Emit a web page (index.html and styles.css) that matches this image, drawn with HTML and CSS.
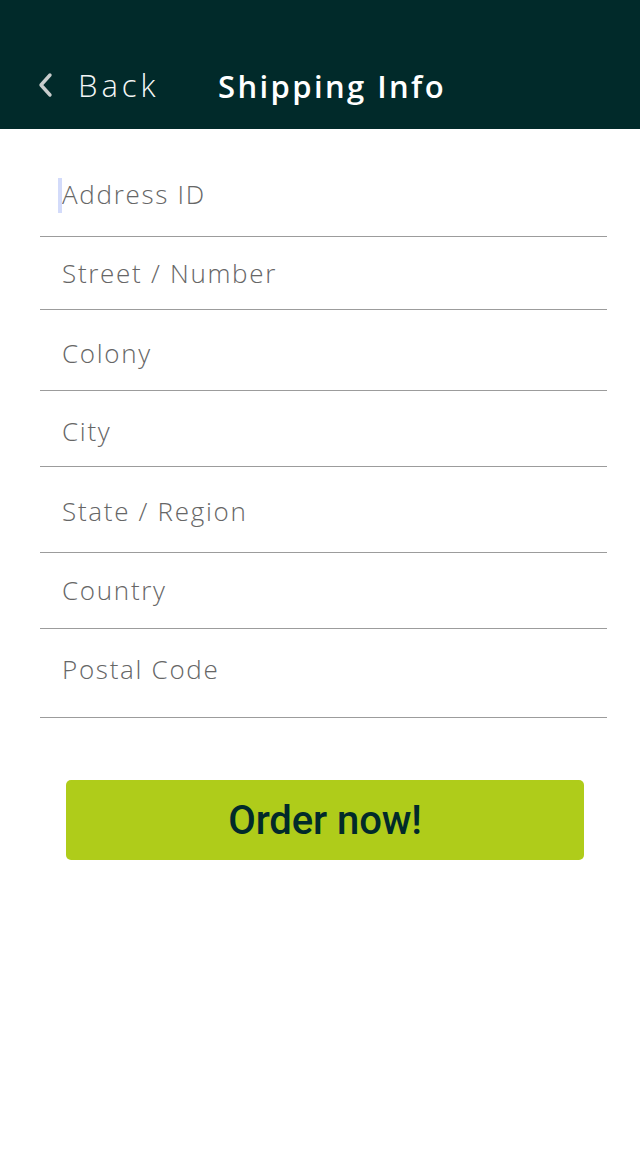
FILE: index.html
```html
<!DOCTYPE html>
<html>
<head>
<meta charset="utf-8">
<link rel="stylesheet" href="styles.css">
</head>
<body>
<header class="topbar">
  <div class="back">
    <svg class="chev" width="18" height="26" viewBox="0 0 18 26"><path d="M14 3 L5 13 L14 23" fill="none" stroke="#c8cccc" stroke-width="3.4" stroke-linecap="round" stroke-linejoin="round"/></svg>
    <span class="back-label">Back</span>
  </div>
  <h1 class="title">Shipping Info</h1>
</header>
<main class="form">
  <div class="field f1"><span class="cursor"></span><span class="label">Address ID</span></div>
  <div class="field f2"><span class="label">Street / Number</span></div>
  <div class="field f3"><span class="label">Colony</span></div>
  <div class="field f4"><span class="label">City</span></div>
  <div class="field f5"><span class="label">State / Region</span></div>
  <div class="field f6"><span class="label">Country</span></div>
  <div class="field f7"><span class="label">Postal Code</span></div>
  <div class="actions">
    <button class="order">Order now!</button>
  </div>
</main>
</body>
</html>
```
FILE: styles.css
```css
* { box-sizing: border-box; }
html, body { margin: 0; padding: 0; background: #fff; }
body { width: 640px; height: 1172px; font-family: "Open Sans", "DejaVu Sans", sans-serif; }

.topbar {
  height: 129px;
  background: #012a2a;
  display: flex;
  align-items: flex-end;
  padding: 0 0 24px 36px;
}
.back { display: flex; align-items: center; gap: 24px; width: 182px; height: 40px; }
.chev { display: block; }
.back-label { color: #f4f6f6; font-size: 31px; font-weight: 300; letter-spacing: 4px; line-height: 40px; }
.title { margin: 0; color: #fff; font-size: 31px; font-weight: 600; letter-spacing: 2.4px; line-height: 40px; position: relative; top: 1px; }

.form { padding: 0 33px 0 40px; }
.field {
  border-bottom: 1px solid #9c9c9c;
  display: flex;
  align-items: flex-end;
  padding-left: 22px;
  position: relative;
}
.label { color: #666; font-size: 26px; font-weight: 300; letter-spacing: 1.7px; line-height: 36px; }
.f1 { height: 108px; padding-bottom: 24px; }
.f2 { height: 73px; padding-bottom: 18px; }
.f3 { height: 81px; padding-bottom: 19px; }
.f4 { height: 76px; padding-bottom: 17px; }
.f5 { height: 86px; padding-bottom: 23px; }
.f6 { height: 76px; padding-bottom: 20px; }
.f7 { height: 89px; padding-bottom: 30px; }
.cursor {
  position: absolute;
  left: 18px;
  bottom: 23px;
  width: 4px;
  height: 35px;
  background: #d3dbfa;
}

.actions { padding: 62px 23px 0 26px; }
.order {
  display: block;
  width: 518px;
  height: 80px;
  border: none;
  border-radius: 5px;
  background: #afcc1a;
  color: #012a2a;
  font-family: Roboto, "Liberation Sans", Arial, sans-serif;
  font-weight: 500;
  font-size: 40px;
  letter-spacing: -0.1px;
  padding: 0;
}
```
